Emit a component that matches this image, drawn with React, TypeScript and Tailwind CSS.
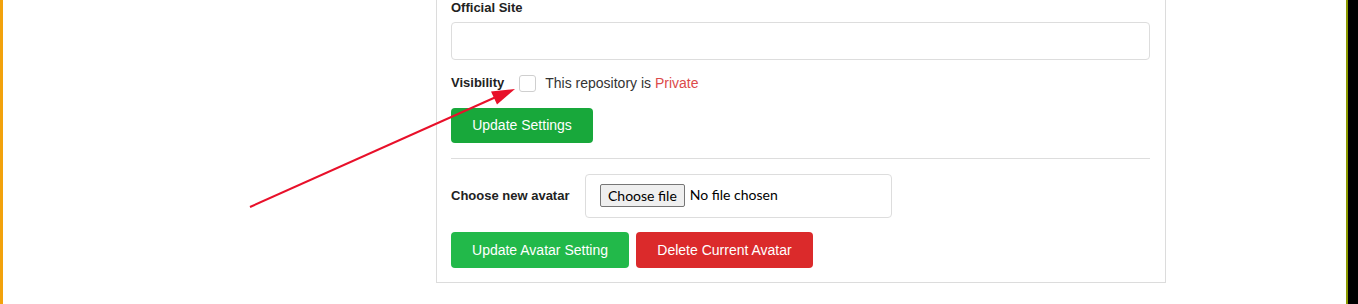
import React from 'react';

const App: React.FC = () => {
  return (
    <div className="relative flex h-[304px] w-[1358px] overflow-hidden bg-white font-['Liberation_Sans',Arial,sans-serif] text-[#222]">
      {/* left frame edge */}
      <div className="w-[3px] shrink-0 bg-[#f2a20c]" />

      <div className="flex-1">
        {/* Settings card (top is cut off) */}
        <div className="ml-[433px] w-[730px] border-x border-b border-[#dcdcdc] pb-[14px] pl-[14px] pr-[15px]">
          <label className="block h-[15px] text-[13px] font-bold leading-[15px]">Official Site</label>
          <input
            type="text"
            className="mt-[7px] block h-[38px] w-full rounded-[4px] border border-[#dddddd] bg-white px-3 outline-none"
          />

          <div className="mt-[14px] flex h-[18px] items-center">
            <span className="text-[13px] font-bold">Visibility</span>
            <span className="ml-[15px] inline-block h-[17px] w-[17px] rounded-[3px] border border-[#cfcfcf] bg-white" />
            <span className="ml-[9px] text-[14px] text-[#333]">
              This repository is <span className="text-[#dc4a4a]">Private</span>
            </span>
          </div>

          <button className="mt-[16px] h-[35px] w-[142px] rounded-[4px] bg-[#18a83b] text-[14px] text-white">
            Update Settings
          </button>

          <hr className="mt-[15px] border-t border-[#dddddd]" />

          <div className="mt-[15px] flex items-center">
            <span className="w-[134px] text-[13px] font-bold">Choose new avatar</span>
            <div className="flex h-[44px] w-[307px] items-start rounded-[4px] border border-[#dddddd] px-[14px] pt-[9px] font-['Lato',sans-serif] text-[14px] leading-[21px] text-black">
              <span className="flex h-[23px] items-center rounded-[2px] border border-[#767676] bg-[#efefef] px-[7px] leading-none">
                Choose file
              </span>
              <span className="ml-[5px]">No file chosen</span>
            </div>
          </div>

          <div className="mt-[14px] flex gap-[7px]">
            <button className="h-[36px] w-[178px] rounded-[4px] bg-[#22b94a] text-[14px] text-white">
              Update Avatar Setting
            </button>
            <button className="h-[36px] w-[177px] rounded-[4px] bg-[#db2a2b] text-[14px] text-white">
              Delete Current Avatar
            </button>
          </div>
        </div>
      </div>

      {/* right frame edge */}
      <div className="w-[2px] shrink-0 bg-[#8c9b00]" />
      <div className="w-[10px] shrink-0 bg-black" />

      {/* annotation arrow */}
      <svg className="pointer-events-none absolute left-0 top-0" width="1358" height="304">
        <line x1="250" y1="207" x2="496" y2="97" stroke="#e8102a" strokeWidth="2" />
        <polygon points="515,89 491,91.5 497,104.5" fill="#e8102a" />
      </svg>
    </div>
  );
};

export default App;
